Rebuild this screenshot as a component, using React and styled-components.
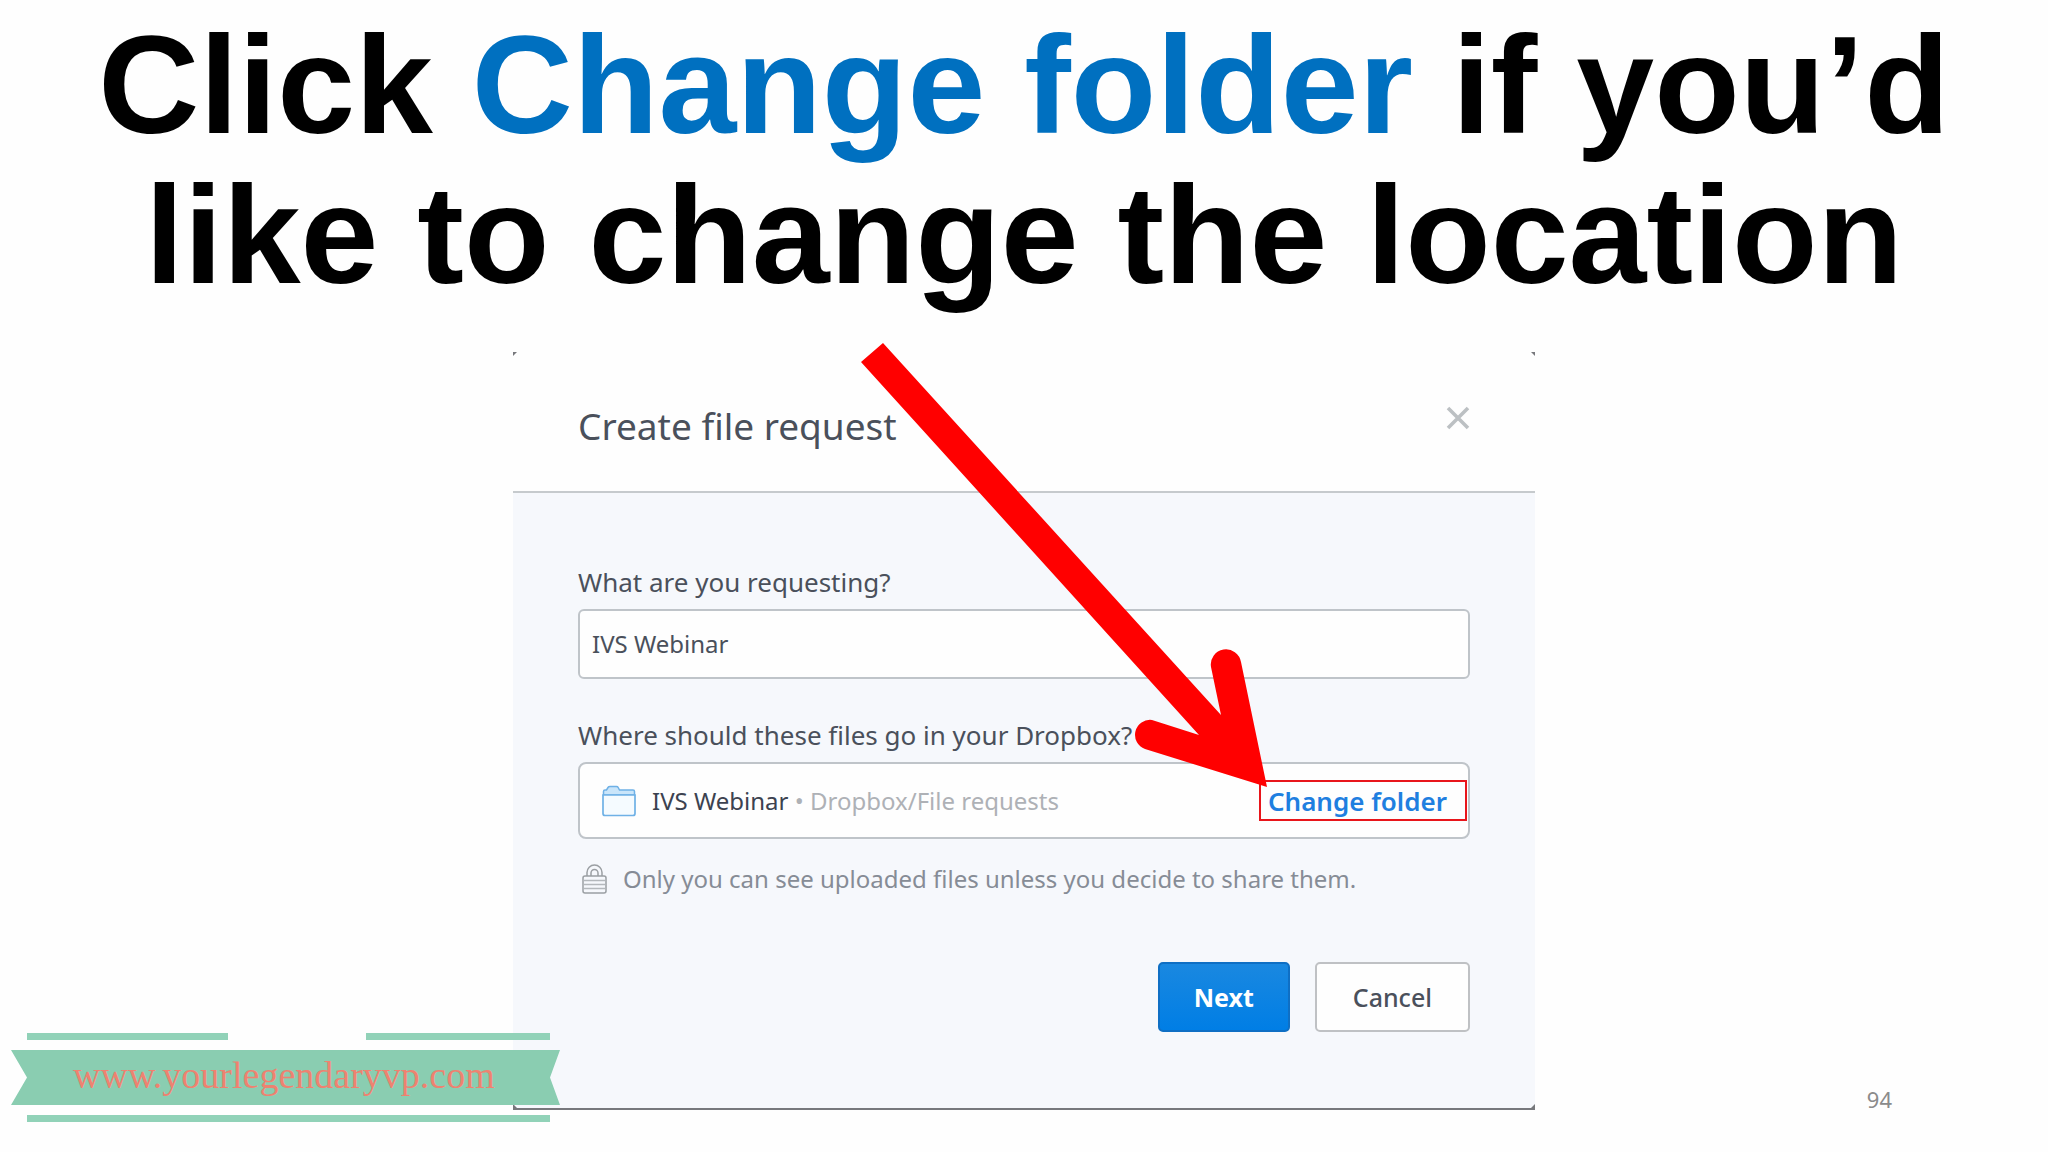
import React, { useState } from "react";
import styled, { createGlobalStyle } from "styled-components";

const GlobalStyle = createGlobalStyle`
    * {
        box-sizing: border-box;
    }
    body {
        margin: 0;
        background: #fefefe;
    }
    h1, h2, p {
        margin: 0;
        font-weight: 400;
    }
    button, input {
        font-family: inherit;
        margin: 0;
    }
`;

function FolderIcon(){
    return (
        <svg width="34" height="32" viewBox="0 0 34 32" fill="none" aria-hidden="true">
            <path d="M1.500 10V6.500Q1.500 5 3 5h1.500L6 2.500Q6.600 1.500 8 1.500h6.500q1.200 0 1.700 1L17.500 5H31q1.500 0 1.500 1.500V10z" fill="#c9e5fa" stroke="#6fb1e6" strokeWidth="1.500"/>
            <path d="M1 10h32v18.500q0 2-2 2H3q-2 0-2-2z" fill="#f5fbff" stroke="#6fb1e6" strokeWidth="1.700"/>
        </svg>
    )
}

function LockIcon(){
    return (
        <svg width="25" height="30" viewBox="0 0 25 30" fill="none" stroke="#9b9fa3" strokeWidth="1.500" aria-hidden="true">
            <path d="M5 12V8.500a7.500 7.500 0 0 1 15 0V12"/>
            <path d="M9 12V9a3.500 3.500 0 0 1 7 0v3"/>
            <rect x="1" y="12" width="23" height="17" rx="2"/>
            <path d="M2 16.500h21M2 20.500h21M2 24.500h21" stroke="#b4b8bc"/>
        </svg>
    )
}

function Ribbon(){
    return (
        <RibbonStyled>
            <RibbonBars>
                <Bar $width="201px"/>
                <Bar $width="184px"/>
            </RibbonBars>
            <Banner>
                <a href="http://www.yourlegendaryvp.com">www.yourlegendaryvp.com</a>
            </Banner>
            <RibbonBars>
                <Bar $width="100%"/>
            </RibbonBars>
        </RibbonStyled>
    )
}

function App(){
    const [request, setRequest] = useState("IVS Webinar");

    return (
        <Slide>
            <GlobalStyle/>
            <Headline>
                <HeadlineRow>Click <mark>Change folder</mark> if you’d </HeadlineRow>
                <HeadlineRow>like to change the location</HeadlineRow>
            </Headline>
            <Dialog role="dialog" aria-labelledby="dialog-title">
                <DialogHeader>
                    <h2 id="dialog-title">Create file request</h2>
                    <CloseButton type="button" aria-label="Close">
                        <svg width="24" height="24" viewBox="0 0 24 24" stroke="#bcc0c3" strokeWidth="3.600">
                            <path d="M2 2l20 20M22 2L2 22"/>
                        </svg>
                    </CloseButton>
                </DialogHeader>
                <DialogBody>
                    <Field>
                        <label htmlFor="request">What are you requesting?</label>
                        <TextInput id="request" type="text" value={request} onChange={(e) => setRequest(e.target.value)}/>
                    </Field>
                    <Field>
                        <label id="folder-label">Where should these files go in your Dropbox?</label>
                        <FolderBox role="group" aria-labelledby="folder-label">
                            <FolderIcon/>
                            <FolderPath>IVS Webinar <span>• Dropbox/File requests</span></FolderPath>
                            <ChangeButton type="button">Change folder</ChangeButton>
                        </FolderBox>
                    </Field>
                    <Notice>
                        <LockIcon/>
                        <p>Only you can see uploaded files unless you decide to share them.</p>
                    </Notice>
                    <Actions>
                        <Button type="button" $primary>Next</Button>
                        <Button type="button">Cancel</Button>
                    </Actions>
                </DialogBody>
                <Corner $side="left" $edge="top"/>
                <Corner $side="right" $edge="top"/>
                <Corner $side="left" $edge="bottom"/>
                <Corner $side="right" $edge="bottom"/>
                <Arrow viewBox="0 0 410 446" aria-hidden="true">
                    <path d="M23 1L361 373L351 325A15 15 0 0 1 381 320L407 445L285 407A15 15 0 0 1 292 378L339 393L1 20Z" fill="#ff0000"/>
                </Arrow>
            </Dialog>
            <Ribbon/>
            <PageNumber>94</PageNumber>
        </Slide>
    )
}

const Slide = styled.main`
    position: relative;
    min-height: 100vh;
    overflow: hidden;
    font-family: "Noto Sans", "Open Sans", sans-serif;
    color: #4a505b;
`;

const Headline = styled.h1`
    padding: 10px 64px 42px;
    text-align: center;
    font-family: "Arial Rounded MT Bold", "Liberation Sans", Arial, sans-serif;
    font-size: 140px;
    line-height: 150px;
    color: #000;
    && {
        font-weight: 700;
    }
`;

const HeadlineRow = styled.span`
    display: block;
    mark {
        background: none;
        color: #0070c0;
    }
`;

const Dialog = styled.section`
    position: relative;
    width: 100%;
    max-width: 1022px;
    margin: 0 auto;
    background: #fefefe;
    border-bottom: 2px solid #77787c;
`;

const DialogHeader = styled.header`
    display: flex;
    justify-content: space-between;
    align-items: flex-start;
    padding: 49px 65px 40px;
    border-bottom: 2px solid #c6cacd;
    h2 {
        font-size: 37px;
        line-height: 50px;
    }
`;

const CloseButton = styled.button`
    display: flex;
    align-items: center;
    height: 34px;
    padding: 0;
    border: 0;
    background: none;
`;

const DialogBody = styled.div`
    padding: 71px 65px 76px;
    background: #f6f8fc;
    font-size: 26px;
    line-height: 36px;
`;

const Field = styled.div`
    display: flex;
    flex-direction: column;
    gap: 9px;
    & + & {
        margin-top: 38px;
    }
`;

const TextInput = styled.input`
    width: 100%;
    height: 70px;
    padding: 0 12px 2px;
    border: 2px solid #bfc4c9;
    border-radius: 6px;
    background: #fefefe;
    font-size: 24px;
    color: #4a505b;
`;

const FolderBox = styled.div`
    display: flex;
    align-items: center;
    gap: 16px;
    height: 77px;
    padding: 0 1px 0 22px;
    border: 2px solid #bfc4c9;
    border-radius: 8px;
    background: #fefefe;
`;

const FolderPath = styled.p`
    flex: 1;
    font-size: 24px;
    color: #3c4250;
    span {
        color: #aeb1b6;
    }
`;

const ChangeButton = styled.button`
    height: 41px;
    padding: 0 18px 0 7px;
    border: 2px solid #e8151b;
    background: none;
    font-size: 26px;
    font-weight: 600;
    line-height: 36px;
    color: #1f7fe0;
`;

const Notice = styled.div`
    display: flex;
    align-items: center;
    gap: 16px;
    margin-top: 22px;
    padding-left: 4px;
    font-size: 24px;
    color: #868c96;
`;

const Actions = styled.div`
    display: flex;
    justify-content: flex-end;
    gap: 25px;
    margin-top: 65px;
`;

const Button = styled.button`
    height: 70px;
    padding: 0 ${(props) => props.$primary ? "34px" : "36px"};
    border: 2px solid ${(props) => props.$primary ? "#0f6fc4" : "#bfc1c4"};
    border-radius: 5px;
    background: ${(props) => props.$primary ? "linear-gradient(#1a88e0, #007ee5)" : "#fefefe"};
    color: ${(props) => props.$primary ? "#fff" : "#4a505b"};
    font-size: 25px;
    font-weight: ${(props) => props.$primary ? 700 : 500};
`;

/* dark ticks left by the cropped window frame */
const Corner = styled.i`
    position: absolute;
    ${(props) => props.$side}: 0;
    ${(props) => props.$edge}: 0;
    width: 4px;
    height: 4px;
    background: #77787c;
    clip-path: ${(props) => {
        const x = props.$side === "left" ? "0" : "100%";
        const y = props.$edge === "top" ? "0" : "100%";
        const farX = x === "0" ? "100%" : "0";
        const farY = y === "0" ? "100%" : "0";
        return `polygon(${x} ${y}, ${farX} ${y}, ${x} ${farY})`;
    }};
`;

const Arrow = styled.svg`
    position: absolute;
    top: -10px;
    left: 347px;
    width: 410px;
    height: 446px;
    pointer-events: none;
`;

const RibbonStyled = styled.aside`
    position: absolute;
    left: 11px;
    bottom: 30px;
    width: 549px;
    display: flex;
    flex-direction: column;
    gap: 10px;
`;

const RibbonBars = styled.div`
    display: flex;
    justify-content: space-between;
    padding: 0 10px 0 16px;
`;

const Bar = styled.div`
    width: ${(props) => props.$width};
    height: 7px;
    background: #91d2b8;
`;

const Banner = styled.div`
    height: 55px;
    padding-left: 62px;
    background: #8acdb1;
    clip-path: polygon(0 0, 100% 0, 539px 50%, 100% 100%, 0 100%, 16px 50%);
    a {
        font-family: "Liberation Serif", "Times New Roman", serif;
        font-size: 38px;
        line-height: 50px;
        color: #ee8270;
        text-decoration: none;
    }
`;

const PageNumber = styled.p`
    position: absolute;
    right: 156px;
    bottom: 37px;
    font-size: 22px;
    line-height: 32px;
    color: #8b8b8b;
`;

export default App
